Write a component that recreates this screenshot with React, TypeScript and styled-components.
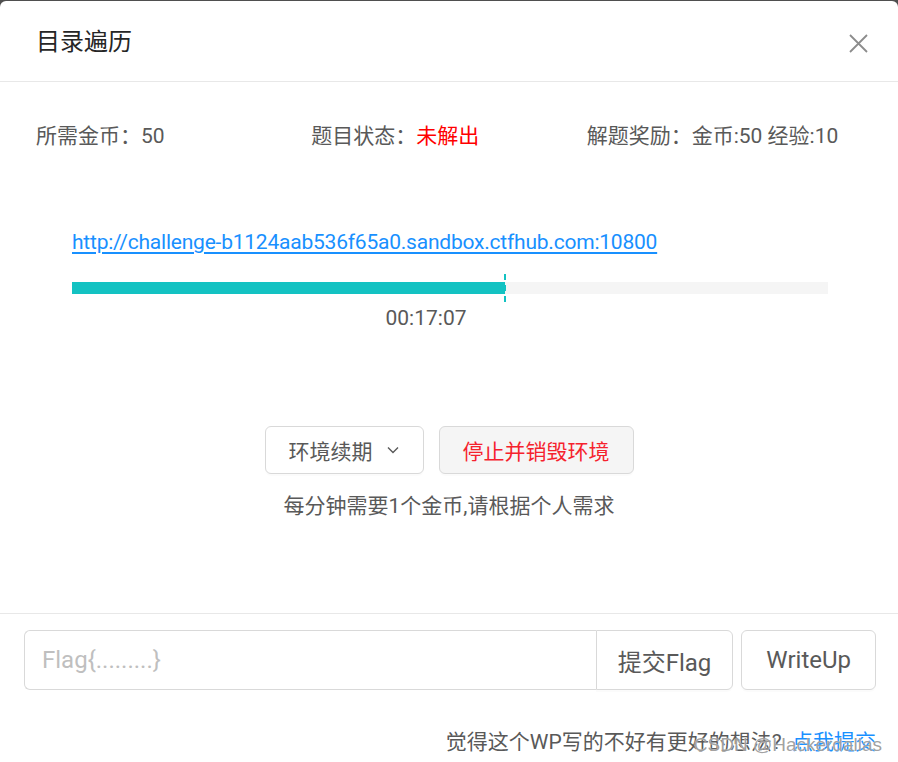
import React, { useState } from "react";
import styled, { createGlobalStyle } from "styled-components";

const GlobalStyle = createGlobalStyle`
  html, body {
    margin: 0;
    padding: 0;
    background: #4f4f4f;
  }
  * {
    box-sizing: border-box;
  }
`;

const FONT = `Roboto, "Noto Sans CJK SC", sans-serif`;

const Modal = styled.div`
  position: relative;
  margin-top: 1px;
  width: 898px;
  height: 761px;
  background: #fff;
  border-radius: 6px 6px 0 0;
  font-family: ${FONT};
  color: #595959;
  display: flex;
  flex-direction: column;
  overflow: hidden;
`;

const Header = styled.div`
  height: 81px;
  padding: 0 36px;
  display: flex;
  align-items: center;
  justify-content: space-between;
  border-bottom: 1px solid #e8e8e8;
`;

const Title = styled.div`
  font-size: 24px;
  color: #262626;
  line-height: 33px;
  margin-top: 3px;
`;

const CloseButton = styled.button`
  border: none;
  background: none;
  padding: 0;
  margin-right: -9px;
  margin-top: 4px;
  width: 26px;
  height: 26px;
  display: flex;
  align-items: center;
  justify-content: center;
  cursor: pointer;
`;

const Body = styled.div`
  padding: 36px 36px 0;
  height: 532px;
  border-bottom: 1px solid #e8e8e8;
`;

const InfoRow = styled.div`
  display: flex;
  font-size: 21px;
  line-height: 33px;
  margin-top: 2px;
`;

const InfoCol = styled.div`
  flex: 1;
`;

const Danger = styled.span`
  color: #ff0000;
`;

const LinkRow = styled.div`
  padding-left: 36px;
  margin-top: 73px;
  font-size: 21px;
  line-height: 33px;
  letter-spacing: -0.22px;
`;

const Link = styled.a`
  color: #1890ff;
  text-decoration: underline;
  text-underline-offset: 3px;
`;

const Track = styled.div`
  position: relative;
  margin: 23px 0 0 36px;
  width: 756px;
  height: 12px;
  background: #f5f5f5;
`;

const Fill = styled.div`
  height: 100%;
  background: #13c2c2;
`;

const Marker = styled.div`
  position: absolute;
  top: -8px;
  width: 0;
  height: 28px;
  border-left: 2px dashed #13c2c2;
`;

const Time = styled.div`
  margin-top: 8px;
  padding-right: 46px;
  text-align: center;
  font-size: 21px;
  line-height: 33px;
`;

const ActionRow = styled.div`
  margin-top: 91px;
  display: flex;
  justify-content: center;
  gap: 15px;
`;

const Button = styled.button<{ $danger?: boolean; $large?: boolean }>`
  font-family: ${FONT};
  height: ${(p) => (p.$large ? 60 : 48)}px;
  padding: 0 ${(p) => (p.$large ? 22 : 23)}px;
  font-size: ${(p) => (p.$large ? 24 : 21)}px;
  color: ${(p) => (p.$danger ? "#f5222d" : "#595959")};
  background: ${(p) => (p.$danger ? "#f5f5f5" : "#fff")};
  border: 1.5px solid #d9d9d9;
  border-radius: 6px;
  box-shadow: 0 2px 0 rgba(0, 0, 0, 0.015);
  display: flex;
  align-items: center;
  gap: 13px;
  cursor: pointer;
`;

const Hint = styled.div`
  margin-top: 16px;
  text-align: center;
  font-size: 21px;
  line-height: 33px;
`;

const Footer = styled.div`
  padding: 16px 22px 0 24px;
`;

const FlagRow = styled.div`
  display: flex;
  gap: 8px;
`;

const InputGroup = styled.div`
  display: flex;
  flex: 1;
`;

const FlagInput = styled.input`
  flex: 1;
  height: 60px;
  padding: 0 17px;
  font-family: ${FONT};
  font-size: 24px;
  color: #595959;
  border: 1.5px solid #d9d9d9;
  border-right: none;
  border-radius: 6px 0 0 6px;
  outline: none;
  &::placeholder {
    color: #bfbfbf;
  }
`;

const GroupButton = styled(Button)`
  border-radius: 0 6px 6px 0;
  padding: 0 21px;
`;

const WriteUpButton = styled(Button)`
  padding: 0 24px;
`;

const Feedback = styled.div`
  margin-top: 36px;
  text-align: right;
  font-size: 21px;
  line-height: 33px;
`;

const Watermark = styled.div`
  position: absolute;
  right: 16px;
  bottom: 6px;
  font-family: "Liberation Sans", sans-serif;
  font-size: 19px;
  color: rgba(120, 120, 120, 0.7);
  text-shadow: 0 0 1px #fff;
  pointer-events: none;
`;

const ChevronDown = () => (
  <svg width="14" height="14" viewBox="0 0 14 14" fill="none">
    <path d="M2 4.5 L7 9.5 L12 4.5" stroke="#595959" strokeWidth="1.4" />
  </svg>
);

const CloseIcon = () => (
  <svg width="19" height="19" viewBox="0 0 19 19">
    <path d="M1 1 L18 18 M18 1 L1 18" stroke="#8c8c8c" strokeWidth="1.8" />
  </svg>
);

const App: React.FC = () => {
  const [flag, setFlag] = useState("");
  const percent = 57.3;

  return (
    <>
      <GlobalStyle />
      <Modal>
        <Header>
          <Title>目录遍历</Title>
          <CloseButton>
            <CloseIcon />
          </CloseButton>
        </Header>
        <Body>
          <InfoRow>
            <InfoCol>所需金币：50</InfoCol>
            <InfoCol>
              题目状态：<Danger>未解出</Danger>
            </InfoCol>
            <InfoCol>解题奖励：金币:50 经验:10</InfoCol>
          </InfoRow>
          <LinkRow>
            <Link href="#">
              http://challenge-b1124aab536f65a0.sandbox.ctfhub.com:10800
            </Link>
          </LinkRow>
          <Track>
            <Fill style={{ width: `${percent}%` }} />
            <Marker style={{ left: `calc(${percent}% - 1px)` }} />
          </Track>
          <Time>00:17:07</Time>
          <ActionRow>
            <Button>
              环境续期
              <ChevronDown />
            </Button>
            <Button $danger>停止并销毁环境</Button>
          </ActionRow>
          <Hint>每分钟需要1个金币,请根据个人需求</Hint>
        </Body>
        <Footer>
          <FlagRow>
            <InputGroup>
              <FlagInput
                placeholder="Flag{.........}"
                value={flag}
                onChange={(e) => setFlag(e.target.value)}
              />
              <GroupButton $large>提交Flag</GroupButton>
            </InputGroup>
            <WriteUpButton $large>WriteUp</WriteUpButton>
          </FlagRow>
          <Feedback>
            觉得这个WP写的不好有更好的想法?&nbsp; <Link as="span" style={{ textDecoration: "none" }}>点我提交</Link>
          </Feedback>
        </Footer>
        <Watermark>CSDN @Hackerdallas</Watermark>
      </Modal>
    </>
  );
};

export default App;
